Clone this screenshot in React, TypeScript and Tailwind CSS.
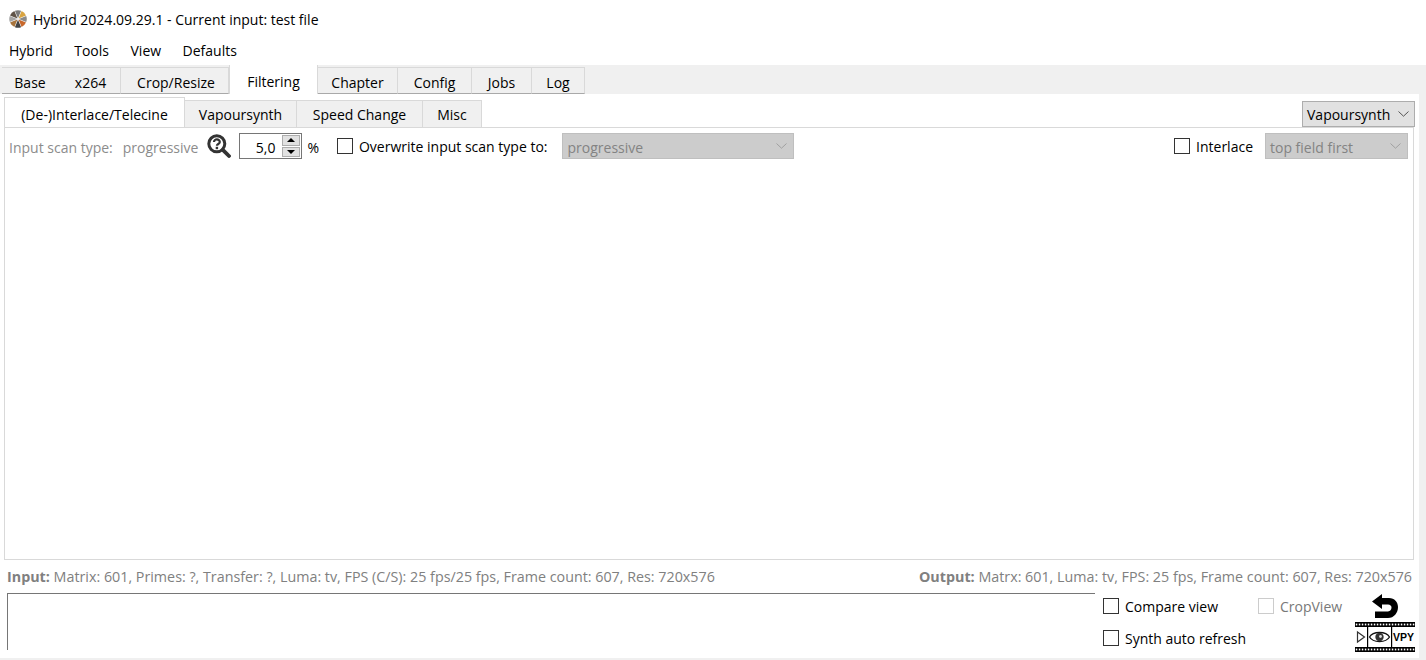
import clsx from 'clsx';

const FONT = '[font-family:"Open_Sans","Noto_Sans",sans-serif]';

const outerTabs = [
  { label: 'Base', w: 'w-[56px]', noRight: true },
  { label: 'x264', w: 'w-[63px] pl-[3px]' },
  { label: 'Crop/Resize', w: 'w-[108px] pl-[3px]' },
  { label: 'Filtering', w: 'w-[89px]', active: true },
  { label: 'Chapter', w: 'w-[80px]' },
  { label: 'Config', w: 'w-[74px]' },
  { label: 'Jobs', w: 'w-[60px]' },
  { label: 'Log', w: 'w-[53px]' },
];

const innerTabs = [
  { label: '(De-)Interlace/Telecine', w: 'w-[181px]', active: true },
  { label: 'Vapoursynth', w: 'w-[112px]' },
  { label: 'Speed Change', w: 'w-[126px]' },
  { label: 'Misc', w: 'w-[59px]' },
];

function Logo() {
  const colors = ['#7a7a7a', '#d9a441', '#8a8a8a', '#c8682c', '#444444', '#a8743c', '#a5a5a5', '#5f5348'];
  return (
    <svg width="18" height="18" viewBox="-9 -9 18 18" className="shrink-0">
      {colors.map((c, i) => (
        <path key={i} d="M0 -0.8 L-3.1 -8.2 Q0 -9.4 3.1 -8.2 Z" fill={c} transform={`rotate(${i * 45})`} />
      ))}
    </svg>
  );
}

function Chevron({ color = '#555' }: { color?: string }) {
  return (
    <svg width="11" height="6" viewBox="0 0 11 6" fill="none">
      <path d="M0.5 0.5 L5.5 5.2 L10.5 0.5" stroke={color} strokeWidth="1" />
    </svg>
  );
}

function Checkbox({ label, disabled }: { label: string; disabled?: boolean }) {
  return (
    <div className="flex shrink-0 items-center">
      <div className={clsx('h-[16px] w-[16px] border bg-white', disabled ? 'border-[#cccccc]' : 'border-[#333333]')} />
      <span className={clsx('ml-[6px] pt-[2px] leading-none', disabled && 'text-[#787878]')}>{label}</span>
    </div>
  );
}

function DisabledCombo({ text, w }: { text: string; w: string }) {
  return (
    <div className={clsx('flex h-[26px] items-center justify-between border border-[#bfbfbf] bg-[#cccccc] pl-[4px] pr-[6px] text-[#838383]', w)}>
      <span className="pt-[3px]">{text}</span>
      <Chevron color="#a0a0a0" />
    </div>
  );
}

function SearchHelp() {
  return (
    <svg width="24" height="24" viewBox="0 0 24 24" fill="none">
      <circle cx="9.8" cy="9.8" r="8" stroke="#333" strokeWidth="3" />
      <path d="M15.8 15.8 L22 22" stroke="#333" strokeWidth="3.8" strokeLinecap="round" />
      <path d="M7 8 C7 4.6 12.8 4.6 12.8 8 C12.8 10 9.9 10 9.9 11.8" stroke="#333" strokeWidth="2.2" />
      <rect x="8.7" y="12.8" width="2.4" height="2.4" fill="#333" />
    </svg>
  );
}

function UndoArrow() {
  return (
    <svg width="26" height="25" viewBox="0 0 26 25">
      <path d="M0 7.5 L10 0 L10 4 L17 4 C22.5 4 26 8 26 13 C26 19 22 24 16 24 L3 24 L3 17.5 L16 17.5 C18.2 17.5 19.5 15.6 19.5 13.6 C19.5 12 18.2 10.6 16 10.6 L10 10.6 L10 15 Z" fill="#000" />
    </svg>
  );
}

function FilmStrip() {
  return (
    <svg width="60" height="30" viewBox="0 0 60 30" className="block">
      <rect x="0" y="0" width="60" height="5" fill="#000" />
      <rect x="0" y="25" width="60" height="5" fill="#000" />
      {Array.from({ length: 20 }).map((_, i) => (
        <g key={i}>
          <rect x={i * 3 + 0.8} y="1.6" width="1.5" height="1.8" fill="#fff" />
          <rect x={i * 3 + 0.8} y="26.6" width="1.5" height="1.8" fill="#fff" />
        </g>
      ))}
      <rect x="12" y="5" width="1.2" height="20" fill="#000" />
      <rect x="36" y="5" width="1.2" height="20" fill="#000" />
      <path d="M2.5 10 L9.5 15 L2.5 20 Z" fill="none" stroke="#333" strokeWidth="1.2" />
      <path d="M14.5 15 C18 9 31 9 34.5 15 C31 21 18 21 14.5 15 Z" fill="none" stroke="#111" strokeWidth="1.3" />
      <circle cx="24.5" cy="15" r="4.2" fill="#333" />
      <circle cx="25.5" cy="14.5" r="1.4" fill="#ddd" />
      <text x="38" y="19.3" fontSize="11" fontWeight="800" fill="#000" textLength="21" lengthAdjust="spacingAndGlyphs" fontFamily="Liberation Sans, sans-serif">
        VPY
      </text>
    </svg>
  );
}

export default function App() {
  return (
    <div className={clsx('flex h-[660px] w-[1426px] flex-col overflow-hidden bg-[#f0f0f0] text-[14px] leading-none text-black', FONT)}>
      {/* Title */}
      <div className="flex h-[37px] items-center gap-[6px] bg-white pl-[9px]">
        <Logo />
        <span className="pt-[2px]">Hybrid 2024.09.29.1 - Current input: test file</span>
      </div>

      {/* Menu */}
      <div className="flex h-[28px] items-center gap-[21.5px] bg-white pl-[9px]">
        <span>Hybrid</span>
        <span>Tools</span>
        <span>View</span>
        <span>Defaults</span>
      </div>

      {/* Outer tabs */}
      <div className="flex h-[29px] pl-[2px]">
        <div className="flex items-end">
          {outerTabs.map((t) => (
            <div
              key={t.label}
              className={clsx(
                'flex items-center justify-center border-[#d9d9d9] pt-[4px]',
                t.w,
                t.active
                  ? 'h-[29px] border-x bg-white'
                  : 'h-[27px] border-t border-r border-b border-b-[#a9a9a9] bg-[#f0f0f0]',
                t.noRight && 'border-r-0',
              )}
            >
              {t.label}
            </div>
          ))}
        </div>
      </div>

      {/* Main panel */}
      <div className="mr-[7px] flex h-[564px] flex-col bg-white pl-[4px]">
        <div className="flex h-[33px] items-end pr-[4px]">
          {innerTabs.map((t) => (
            <div
              key={t.label}
              className={clsx(
                'flex items-center justify-center border-[#d9d9d9]',
                t.w,
                t.active ? 'h-[30px] border-x border-t bg-white pt-[4px]' : 'h-[27px] border-t border-r bg-[#f0f0f0] pt-[2px]',
              )}
            >
              {t.label}
            </div>
          ))}
          <div className="ml-auto flex h-[26px] w-[113px] items-center justify-between self-end border border-[#adadad] bg-[#e1e1e1] pl-[4px] pr-[5px]">
            <span className="pt-[2px]">Vapoursynth</span>
            <Chevron />
          </div>
        </div>

        <div className="mr-[5px] flex h-[433px] flex-col border border-[#d9d9d9] pt-[5px]">
          <div className="flex h-[26px] items-center">
            <span className="ml-[4px] pt-[3px] text-[#8c8c8c]">Input scan type:</span>
            <span className="ml-[10px] pt-[3px] text-[#8c8c8c]">progressive</span>
            <div className="ml-[9px] flex h-[26px] w-[24px] items-center">
              <SearchHelp />
            </div>
            <div className="ml-[8px] flex h-[26px] w-[63px] items-center border border-[#767676] bg-white">
              <span className="flex-1 pr-[7px] pt-[3px] text-right">5,0</span>
              <div className="mr-[1px] flex h-[22px] w-[18px] flex-col gap-px">
                <div className="flex flex-1 items-center justify-center border border-[#adadad] bg-[#e1e1e1]">
                  <div className="h-0 w-0 border-x-[4px] border-b-[4px] border-x-transparent border-b-black" />
                </div>
                <div className="flex flex-1 items-center justify-center border border-[#adadad] bg-[#e1e1e1]">
                  <div className="h-0 w-0 border-x-[4px] border-t-[4px] border-x-transparent border-t-black" />
                </div>
              </div>
            </div>
            <span className="ml-[5px] pt-[3px]">%</span>
            <div className="ml-[18px]">
              <Checkbox label="Overwrite input scan type to:" />
            </div>
            <div className="ml-[15px]">
              <DisabledCombo text="progressive" w="w-[232px]" />
            </div>
            <div className="ml-auto">
              <Checkbox label="Interlace" />
            </div>
            <div className="ml-[12px] mr-[5px]">
              <DisabledCombo text="top field first" w="w-[143px]" />
            </div>
          </div>
        </div>

        {/* Info line */}
        <div className="flex h-[33px] items-center justify-between pl-[3px] pr-[7px] pt-[2px] text-[14.3px] text-[#808080]">
          <span>
            <b>Input:</b> Matrix: 601, Primes: ?, Transfer: ?, Luma: tv, FPS (C/S): 25 fps/25 fps, Frame count: 607, Res: 720x576
          </span>
          <span>
            <b>Output:</b> Matrx: 601, Luma: tv, FPS: 25 fps, Frame count: 607, Res: 720x576
          </span>
        </div>

        {/* Bottom */}
        <div className="flex h-[65px]">
          <div className="ml-[3px] h-[57px] w-[1088px] border-l border-t border-[#767676]" />
          <div className="ml-[8px] flex w-[240px] flex-col pt-[5px]">
            <div className="flex h-[16px] items-center">
              <div className="w-[155px] shrink-0">
                <Checkbox label="Compare view" />
              </div>
              <Checkbox label="CropView" disabled />
            </div>
            <div className="mt-[16px] flex h-[16px] items-center">
              <Checkbox label="Synth auto refresh" />
            </div>
          </div>
          <div className="ml-[12px] flex w-[60px] flex-col items-center">
            <div className="mt-[1px] h-[25px]">
              <UndoArrow />
            </div>
            <div className="mt-[3px]">
              <FilmStrip />
            </div>
          </div>
        </div>
      </div>
      <div className="h-[1px] bg-[#f0f0f0]" />
    </div>
  );
}
